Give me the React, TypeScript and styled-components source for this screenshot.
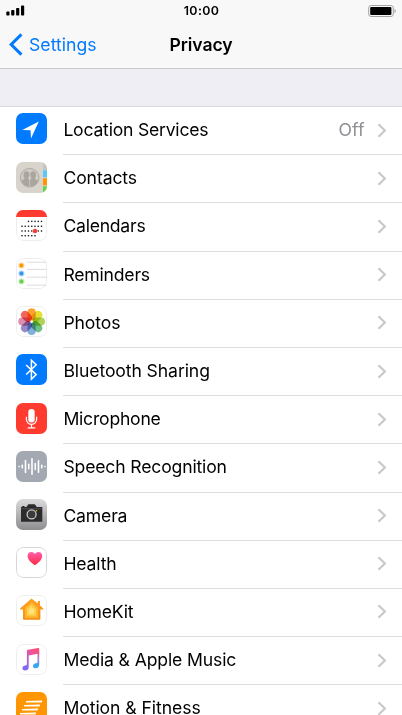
import React from "react";
import styled, { createGlobalStyle } from "styled-components";

const GlobalStyle = createGlobalStyle`
	* {
		box-sizing: border-box;
	}

	body {
		margin: 0;
		background-color: #efeef4;
		font-family: "Inter", "Liberation Sans", sans-serif;
		color: #000;
	}
`;

const Screen = styled.div`
	width: 100%;
	height: 100vh;
	overflow: hidden;

	display: flex;
	flex-direction: column;

	background-color: #efeef4;
`;

const Header = styled.header`
	height: 69px;
	flex-shrink: 0;

	display: flex;
	flex-direction: column;

	background-color: #f8f8f8;
	border-bottom: 1px solid #cbcbce;
`;

const StatusBar = styled.div`
	height: 22px;
	padding: 0 5px 0 6px;

	display: grid;
	grid-template-columns: 1fr auto 1fr;
	align-items: center;
`;

const Clock = styled.span`
	font-size: 12.4px;
	font-weight: 600;
	line-height: 22px;
	letter-spacing: 0.35px;
`;

const StatusIcon = styled.svg`
	display: block;
`;

const BatteryIcon = styled(StatusIcon)`
	justify-self: end;
`;

const NavBar = styled.nav`
	height: 46px;
	padding: 0 9px 1px;

	display: grid;
	grid-template-columns: 1fr auto 1fr;
	align-items: center;
`;

const BackButton = styled.button`
	padding: 0;
	border: 0;
	background: none;

	display: flex;
	align-items: center;
	gap: 6px;

	font-family: inherit;
	font-size: 17.6px;
	letter-spacing: 0.04px;
	color: #007aff;
`;

const Title = styled.h1`
	margin: 0;

	font-size: 17.6px;
	font-weight: 600;
	letter-spacing: -0.1px;
`;

const List = styled.ul`
	margin: 37px 0 0;
	padding: 0;
	border-top: 1px solid #d9d8dd;

	list-style: none;
	background-color: #fff;
`;

const Row = styled.li`
	height: 48.2px;
	padding-left: 16px;

	display: flex;
	gap: 16px;
`;

const AppIcon = styled.svg`
	width: 31px;
	height: 31px;
	margin-top: 6.48px;
	flex-shrink: 0;
	overflow: hidden;
	border-radius: 7px;
`;

const RowBody = styled.div`
	flex: 1;
	padding: 0 15.5px 1px 0.4px;
	border-bottom: 1px solid #dedde1;

	display: flex;
	align-items: center;
`;

const Label = styled.span<{ $spacing: number }>`
	flex: 1;
	padding-bottom: 0.2px;

	font-size: 17.6px;
	line-height: 22px;
	letter-spacing: ${({ $spacing }) => $spacing}px;
	white-space: nowrap;
`;

const Value = styled.span`
	margin-right: 12px;
	padding-bottom: 0.2px;

	font-size: 17.6px;
	line-height: 22px;
	letter-spacing: 0.1px;
	color: #8e8e93;
`;

const Plate = ({ fill = "#fff" }: { fill?: string }) => (
	<rect
		x="0.5"
		y="0.5"
		width="30"
		height="30"
		rx="6.8"
		fill={fill}
		stroke="#ededed"
	/>
);

const LocationIcon = () => (
	<>
		<rect width="31" height="31" fill="#007aff" />
		<path d="M22.8 8.6 6.3 17l8.2.3.5 8.2z" fill="#fff" />
	</>
);

const ContactsIcon = () => (
	<>
		<rect width="31" height="31" fill="#d8d4cb" />
		<path d="M27 0h4v8h-4z" fill="#c6c4bf" />
		<path d="M27 8.3h4v7h-4z" fill="#5ac8fa" />
		<path d="M27 16.3h4v7h-4z" fill="#ff9500" />
		<path d="M27 24.3h4V31h-4z" fill="#63d64b" />
		<circle
			cx="13.7"
			cy="15.7"
			r="9.3"
			fill="#d0ccc4"
			stroke="#aaa69f"
			strokeWidth="0.9"
		/>
		<g fill="#aaa59e">
			<path d="M10.4 9.2c2.2 0 3.1 1.7 2.9 3.8-.1 1.4-.7 2.2-1.1 2.8 0 1.6 1.3 1.5 1.3 3.2v5.5c-4 0-7.2-2.2-8-6 1.2-.8 3-.8 3.2-2.5-.8-.8-1.2-1.7-1.2-3.1 0-2.1.8-3.7 2.9-3.7z" />
			<path d="M17.2 9.2c-2.2 0-3.1 1.7-2.9 3.8.1 1.4.6 2.2 1 2.8 0 1.6-1.4 1.5-1.4 3.2v5.5c4.1 0 7.2-2.2 8-6-1.2-.8-2.9-.8-3.1-2.5.8-.8 1.2-1.7 1.2-3.1 0-2.1-.8-3.7-2.8-3.7z" />
		</g>
		<path d="M13.7 16.5v8" stroke="#d0ccc4" strokeWidth="0.6" />
	</>
);

const CALENDAR_ROWS = [
	{ y: 11.4, from: 2, to: 6 },
	{ y: 16.3, from: 0, to: 6 },
	{ y: 21, from: 0, to: 6 },
	{ y: 25.7, from: 0, to: 4 },
];

const CalendarIcon = () => (
	<>
		<Plate />
		<path d="M0 0h31v7H0z" fill="#ff3b30" />
		{CALENDAR_ROWS.map(({ y, from, to }) =>
			Array.from({ length: to - from + 1 }, (_, i) => (
				<rect
					key={`${y}-${i}`}
					x={5.3 + (from + i) * 3.25}
					y={y - 0.7}
					width="1.4"
					height="1.4"
					fill="#222"
				/>
			))
		)}
		<circle cx="19" cy="21" r="2.2" fill="#ff3b30" />
	</>
);

const RemindersIcon = () => (
	<>
		<Plate />
		<path
			d="M11 4.2h20M11 11.4h20M11 19.2h20M11 27.2h20"
			stroke="#d3d3d3"
			strokeWidth="0.8"
		/>
		{[
			["#ff9500", 7.5],
			["#2f96f5", 15.5],
			["#62d34a", 23.4],
		].map(([color, y]) => (
			<g key={color} fill={String(color)}>
				<circle cx="5.4" cy={y} r="3" opacity="0.4" />
				<circle cx="5.4" cy={y} r="1.9" />
			</g>
		))}
	</>
);

const PETALS = [
	"#fb9a1a",
	"#e3dc1c",
	"#a5cf43",
	"#62b978",
	"#72a7da",
	"#8d80c0",
	"#d884a8",
	"#f2554a",
];

const PhotosIcon = () => (
	<>
		<Plate />
		{PETALS.map((color, i) => (
			<rect
				key={color}
				x="11.5"
				y="2.2"
				width="8.2"
				height="12.2"
				rx="4.1"
				fill={color}
				opacity="0.9"
				transform={`rotate(${i * 45} 15.6 15.6)`}
				style={{ mixBlendMode: "multiply" }}
			/>
		))}
	</>
);

const BluetoothIcon = () => (
	<>
		<rect width="31" height="31" fill="#007aff" />
		<path
			d="m10.2 11 10 9.6-4.8 4.7V6.2l4.8 4.6-10 9.7"
			fill="none"
			stroke="#fff"
			strokeWidth="1.5"
		/>
	</>
);

const MicrophoneIcon = () => (
	<>
		<rect width="31" height="31" fill="#ff3b30" />
		<rect x="12.3" y="6" width="6.4" height="13.4" rx="3.2" fill="#fff" />
		<path
			d="M10.4 13.8v2.4a5.1 5.1 0 0 0 10.2 0v-2.4M15.5 21.2v3.5M11.7 24.8h7.6"
			fill="none"
			stroke="#fff"
			strokeWidth="1.2"
		/>
	</>
);

const WAVE = [1.6, 4, 13.5, 6, 17, 7.5, 13, 4, 1.6];

const SpeechIcon = () => (
	<>
		<rect width="31" height="31" fill="#a2a9b3" />
		{WAVE.map((height, i) => (
			<rect
				key={i}
				x={2.2 + i * 3.25}
				y={15.6 - height / 2}
				width="1.6"
				height={height}
				rx="0.8"
				fill="#fff"
			/>
		))}
	</>
);

const CameraIcon = () => (
	<>
		<defs>
			<linearGradient id="camera" x2="0" y2="1">
				<stop stopColor="#dbdbdc" />
				<stop offset="1" stopColor="#8d8d90" />
			</linearGradient>
		</defs>
		<rect width="31" height="31" fill="url(#camera)" />
		<path
			d="M5 8h5.2c1 0 1.4-2.8 2.4-2.8h6c1 0 1.4 2.8 2.4 2.8h5.3v14.7H5z"
			fill="#2b2b2b"
		/>
		<path d="M5 9.8h21.3" stroke="#777" strokeWidth="0.5" />
		<path d="M6.2 7h2.3v1H6.2z" fill="#2b2b2b" />
		<circle
			cx="15.6"
			cy="15.4"
			r="4.5"
			fill="#3a3a3a"
			stroke="#c9c9ca"
			strokeWidth="1.3"
		/>
		<circle cx="20.5" cy="11.8" r="0.7" fill="#ffcc00" />
	</>
);

const HealthIcon = () => (
	<>
		<defs>
			<linearGradient id="health" x2="0" y2="1">
				<stop stopColor="#ff5fae" />
				<stop offset="1" stopColor="#ff2840" />
			</linearGradient>
		</defs>
		<rect
			x="0.5"
			y="0.5"
			width="30"
			height="30"
			rx="6.8"
			fill="#fff"
			stroke="#d6d6d9"
		/>
		<path
			d="M18.9 18.2c-2.8-1.9-7.3-5.4-7.3-9.3 0-2.2 1.6-3.8 3.7-3.8 1.5 0 2.9.7 3.6 2 .7-1.3 2.1-2 3.6-2 2.1 0 3.7 1.6 3.7 3.8 0 3.9-4.5 7.4-7.3 9.3z"
			fill="url(#health)"
		/>
	</>
);

const HomeKitIcon = () => (
	<>
		<defs>
			<linearGradient id="home" x2="0" y2="1">
				<stop stopColor="#ffa321" />
				<stop offset="1" stopColor="#f78c12" />
			</linearGradient>
		</defs>
		<Plate />
		<path
			d="M15.5 3.4 4.3 13.2c-.5.5 0 1.6.7 1.3h2v9c0 .9.4 1.3 1.2 1.3h14.9c.8 0 1.3-.4 1.3-1.3v-9h1.9c.8.2 1.2-.8.7-1.3l-3-2.6V6h-2.2v2.6z"
			fill="url(#home)"
		/>
		<path d="M15.5 6.9 8.9 12.8v10.1h13.3V12.8z" fill="#ffb52e" />
		<path d="m15.5 9.5-4.5 4v7.3h9v-7.3z" fill="#ffd04f" />
		<path d="m15.5 12.2-2.5 2.2v4.3h5v-4.3z" fill="#ffe478" />
	</>
);

const MusicIcon = () => (
	<>
		<defs>
			<linearGradient id="music" x1="1" x2="0.4" y2="1">
				<stop stopColor="#ff4e6b" />
				<stop offset="0.35" stopColor="#f0559b" />
				<stop offset="1" stopColor="#8267f5" />
			</linearGradient>
			<linearGradient id="musicStem" x2="0" y2="1">
				<stop stopColor="#ff4e6b" />
				<stop offset="0.45" stopColor="#a982dc" />
				<stop offset="0.8" stopColor="#35a8f5" />
			</linearGradient>
		</defs>
		<Plate />
		<path
			d="M21.5 8h1.7v12.7c0 2.2-1.5 3.6-3.6 3.6-1.5 0-2.6-.9-2.6-2.3 0-1.7 1.3-2.4 3-2.8 1.2-.2 1.5-.5 1.5-1.4z"
			fill="url(#musicStem)"
		/>
		<path
			d="M10.9 6.8c0-.6.3-.9.9-1l10.4-1.9c.6-.1 1 .2 1 .8v4.8l-10.5 2v11.4c0 2.2-1.5 3.6-3.6 3.6-1.7 0-2.7-1-2.7-2.4 0-1.6 1.3-2.4 3-2.7 1.2-.2 1.5-.6 1.5-1.4z"
			fill="url(#music)"
		/>
	</>
);

const MotionIcon = () => (
	<>
		<rect width="31" height="31" fill="#ff9500" />
		<path
			d="M10 9.1 26.4 8.4 25.7 10.4H10zM8 13.1l16.2-.7-.6 2H8zM6 17.1l16.2-.7-.6 2H6zM4 21.1l16.2-.7-.6 2H4z"
			fill="#fff"
		/>
	</>
);

const Chevron = () => (
	<svg width="10" height="15" viewBox="0 0 10 15">
		<path
			d="m1.5 1.2 6.4 6.3-6.4 6.3"
			fill="none"
			stroke="#c7c7cc"
			strokeWidth="2.1"
		/>
	</svg>
);

const items = [
	{ label: "Location Services", icon: LocationIcon, value: "Off", spacing: -0.22 },
	{ label: "Contacts", icon: ContactsIcon, spacing: -0.1 },
	{ label: "Calendars", icon: CalendarIcon, spacing: -0.24 },
	{ label: "Reminders", icon: RemindersIcon, spacing: -0.2 },
	{ label: "Photos", icon: PhotosIcon, spacing: -0.08 },
	{ label: "Bluetooth Sharing", icon: BluetoothIcon, spacing: -0.1 },
	{ label: "Microphone", icon: MicrophoneIcon, spacing: -0.22 },
	{ label: "Speech Recognition", icon: SpeechIcon, spacing: -0.16 },
	{ label: "Camera", icon: CameraIcon, spacing: -0.16 },
	{ label: "Health", icon: HealthIcon, spacing: -0.14 },
	{ label: "HomeKit", icon: HomeKitIcon, spacing: -0.22 },
	{ label: "Media & Apple Music", icon: MusicIcon, spacing: -0.13 },
	{ label: "Motion & Fitness", icon: MotionIcon, spacing: -0.06 },
];

function App() {
	return (
		<Screen>
			<GlobalStyle />
			<Header>
				<StatusBar>
					<StatusIcon width="20" height="12" viewBox="0 0 20 12">
						<rect x="0.3" y="6.6" width="3.2" height="4" rx="0.8" />
						<rect x="5.2" y="5" width="3.2" height="5.6" rx="0.8" />
						<rect x="10.1" y="3" width="3.2" height="7.6" rx="0.8" />
						<rect x="15" y="0.6" width="3.2" height="10" rx="0.8" />
					</StatusIcon>
					<Clock>10:00</Clock>
					<BatteryIcon width="29" height="12" viewBox="0 0 29 12">
						<rect
							x="0.7"
							y="0.5"
							width="24.6"
							height="11"
							rx="2.4"
							fill="none"
							stroke="#a3a3a3"
						/>
						<rect x="2.2" y="2" width="21.2" height="8" rx="1" />
						<path d="M26.5 4c1.7.4 1.7 3.6 0 4z" fill="#a3a3a3" />
					</BatteryIcon>
				</StatusBar>
				<NavBar>
					<BackButton>
						<svg width="14" height="23" viewBox="0 0 14 23">
							<path
								d="M12.4 1.4 2.2 11.5l10.2 10.1"
								fill="none"
								stroke="#007aff"
								strokeWidth="3"
							/>
						</svg>
						Settings
					</BackButton>
					<Title>Privacy</Title>
				</NavBar>
			</Header>
			<List>
				{items.map(({ label, icon: Icon, value, spacing }) => (
					<Row key={label}>
						<AppIcon viewBox="0 0 31 31">
							<Icon />
						</AppIcon>
						<RowBody>
							<Label $spacing={spacing}>{label}</Label>
							{value && <Value>{value}</Value>}
							<Chevron />
						</RowBody>
					</Row>
				))}
			</List>
		</Screen>
	);
}

export default App;
